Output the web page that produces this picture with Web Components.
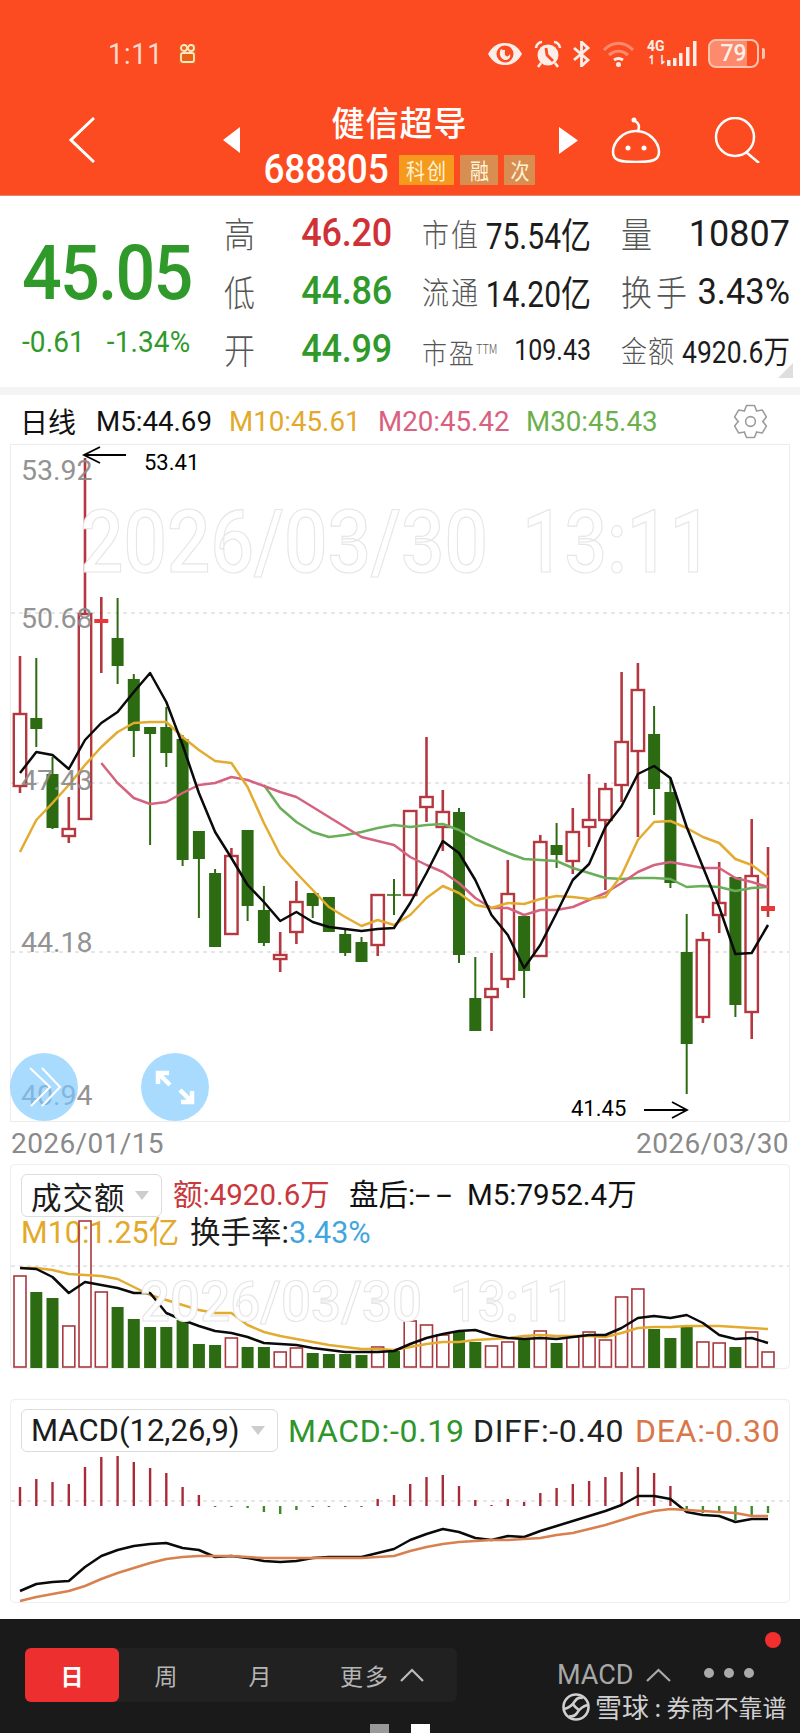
<!doctype html>
<html lang="zh">
<head>
<meta charset="utf-8">
<title>健信超导</title>
<style>
	html, body { margin: 0; background: #fff; }
	body {
		width: 800px;
		height: 1733px;
		overflow: hidden;
		font-family: Roboto, "Noto Sans CJK SC", sans-serif;
	}
	.gap-macd { height: 30px; }
	.gap-bar { height: 16px; }
</style>
</head>
<body>
	<app-header></app-header>
	<quote-panel></quote-panel>
	<ma-legend></ma-legend>
	<kline-chart>
		<round-button kind="forward"></round-button>
		<round-button kind="expand"></round-button>
	</kline-chart>
	<date-axis from="2026/01/15" to="2026/03/30"></date-axis>
	<volume-panel></volume-panel>
	<div class="gap-macd"></div>
	<macd-panel></macd-panel>
	<div class="gap-bar"></div>
	<period-bar></period-bar>

<script>
const FONT = 'Roboto, "Noto Sans CJK SC", sans-serif';
const CJK = '"Noto Sans CJK SC", Roboto, sans-serif';

// candles: type, wick top, body top, body bottom, wick bottom
const CANDLES = [
	['r', 656, 713, 787, 793], ['g', 658, 718, 729, 747], ['g', 757, 774, 828, 829], ['r', 797, 828, 837, 843],
	['r', 458, 613, 820, 820], ['d', 597, 619, 623, 673], ['g', 598, 638, 666, 684], ['g', 674, 679, 731, 757],
	['g', 727, 727, 734, 845], ['g', 707, 727, 753, 767], ['g', 735, 739, 860, 866], ['g', 831, 831, 859, 918],
	['g', 869, 873, 947, 947], ['r', 848, 855, 935, 935], ['g', 830, 830, 906, 921], ['g', 886, 910, 943, 946],
	['r', 932, 954, 960, 972], ['r', 881, 901, 933, 944], ['g', 893, 893, 906, 918], ['g', 897, 897, 932, 932],
	['g', 930, 934, 953, 956], ['g', 937, 942, 962, 962], ['r', 894, 894, 946, 956], ['x', 879, 895, 895, 915],
	['r', 810, 810, 896, 896], ['r', 737, 796, 808, 822], ['r', 790, 811, 828, 851], ['g', 808, 812, 955, 963],
	['g', 957, 998, 1031, 1031], ['r', 953, 988, 998, 1031], ['r', 860, 893, 980, 988], ['g', 916, 916, 971, 998],
	['r', 835, 841, 957, 957], ['g', 823, 845, 855, 868], ['r', 808, 831, 862, 874], ['r', 774, 819, 828, 847],
	['r', 783, 788, 821, 890], ['r', 672, 741, 786, 802], ['r', 663, 689, 752, 837], ['g', 706, 734, 789, 815],
	['g', 778, 792, 883, 888], ['g', 914, 952, 1044, 1094], ['r', 932, 939, 1018, 1023], ['r', 862, 902, 916, 933],
	['g', 877, 877, 1005, 1017], ['r', 819, 875, 1013, 1039], ['d', 847, 906, 911, 917],
];
const M5 = [773, 752, 755, 769, 740, 723, 712, 692, 673, 702, 745, 793, 832, 858, 885, 902, 921, 912, 922, 927, 929, 931, 929, 928, 903, 873, 841, 853, 880, 915, 935, 968, 945, 913, 880, 864, 827, 806, 774, 766, 778, 827, 867, 907, 954, 953, 925];
const M10 = [852, 820, 803, 785, 765, 747, 732, 723, 722, 722, 737, 750, 761, 763, 787, 823, 855, 873, 890, 907, 917, 926, 920, 925, 915, 898, 886, 893, 905, 908, 903, 904, 899, 896, 897, 899, 897, 875, 840, 822, 821, 828, 837, 843, 859, 865, 877];
const M20 = [763, 783, 798, 804, 802, 793, 785, 783, 777, 780, 786, 792, 797, 807, 817, 827, 837, 841, 845, 857, 865, 872, 883, 898, 908, 908, 915, 910, 910, 907, 900, 893, 883, 872, 865, 862, 865, 868, 868, 878, 882, 887];
const M30 = [785, 808, 822, 832, 837, 835, 832, 828, 825, 827, 825, 824, 830, 839, 846, 853, 859, 860, 861, 868, 873, 878, 879, 878, 878, 879, 887, 886, 887, 891, 888, 887];

const VOL = [1276, 1292, 1298, 1326, 1221, 1292, 1307, 1319, 1327, 1327, 1320, 1344, 1345, 1338, 1347, 1347, 1352, 1348, 1353, 1354, 1354, 1355, 1347, 1351, 1321, 1325, 1335, 1332, 1342, 1346, 1342, 1340, 1331, 1343, 1337, 1332, 1340, 1297, 1289, 1329, 1338, 1327, 1342, 1343, 1347, 1332, 1352];
const VOL5 = [1268, 1269, 1277, 1293, 1282, 1285, 1288, 1293, 1293, 1313, 1320, 1326, 1331, 1333, 1337, 1343, 1344, 1345, 1348, 1350, 1352, 1352, 1352, 1351, 1344, 1338, 1334, 1331, 1330, 1335, 1338, 1339, 1338, 1339, 1337, 1335, 1335, 1328, 1318, 1316, 1318, 1315, 1323, 1335, 1339, 1338, 1343];
const VOL10 = [1268, 1268, 1270, 1274, 1275, 1276, 1279, 1287, 1295, 1300, 1305, 1310, 1313, 1313, 1325, 1332, 1336, 1339, 1342, 1345, 1347, 1349, 1349, 1350, 1347, 1344, 1342, 1342, 1340, 1339, 1338, 1336, 1335, 1336, 1336, 1336, 1337, 1333, 1328, 1327, 1327, 1326, 1326, 1326, 1327, 1328, 1329];

// macd bars run from 1506 to this value
const HIST = [1487, 1479, 1482, 1484, 1467, 1457, 1456, 1462, 1468, 1473, 1487, 1495, 1507, 1507, 1508, 1512, 1514, 1510, 1507, 1507, 1507, 1507, 1499, 1495, 1484, 1477, 1475, 1486, 1500, 1505, 1499, 1502, 1493, 1488, 1484, 1481, 1477, 1472, 1467, 1473, 1486, 1509, 1513, 1513, 1520, 1515, 1513];
const DIFF = [1591, 1584, 1582, 1581, 1567, 1556, 1550, 1546, 1544, 1543, 1548, 1550, 1557, 1556, 1558, 1561, 1562, 1561, 1558, 1557, 1557, 1557, 1553, 1549, 1540, 1534, 1529, 1532, 1538, 1540, 1536, 1537, 1531, 1526, 1521, 1516, 1511, 1505, 1496, 1496, 1499, 1512, 1515, 1516, 1522, 1519, 1519];
const DEA = [1601, 1597, 1594, 1591, 1586, 1579, 1573, 1568, 1563, 1559, 1557, 1556, 1556, 1556, 1557, 1558, 1558, 1558, 1558, 1558, 1558, 1558, 1557, 1556, 1551, 1547, 1544, 1542, 1541, 1540, 1540, 1539, 1538, 1535, 1533, 1529, 1525, 1520, 1515, 1511, 1509, 1510, 1511, 1512, 1513, 1516, 1516];

const RED = '#b5373f';
const GREEN = '#2c6b12';

const slotX = (i) => +(20 + 16.26 * i).toFixed(1);

const maLine = (ys, color, start = 0, width = 2.5) => {
	const points = ys.map((y, i) => `${slotX(i + start)},${y}`).join(' ');
	return `<polyline points="${points}" fill="none" stroke="${color}" stroke-width="${width}" stroke-linejoin="round"/>`;
};

const dashed = (y) => `<line x1="11" x2="789" y1="${y}" y2="${y}" stroke="#cfcfcf" stroke-width="1" stroke-dasharray="4 4"/>`;

const stamp = (x, y, size, length, label) => `
	<text x="${x}" y="${y}" font-size="${size}" font-weight="500" textLength="${length}" lengthAdjust="spacingAndGlyphs"
		fill="#fff" stroke="#e6e6e6" stroke-width="1.2">${label}</text>`;

function makeTemplate(html) {
	const template = document.createElement('template');
	template.innerHTML = html;
	return template;
}

class Base extends HTMLElement {
	constructor() {
		super();
		this.attachShadow({ mode: 'open' });
		this.shadowRoot.appendChild(this.constructor.template.content.cloneNode(true));
	}
}

class AppHeader extends Base {
	static template = makeTemplate(`
		<style>
			:host {
				display: block;
				height: 196px;
				box-sizing: border-box;
				background: #fc4b20;
				border-bottom: 1px solid #e08a70;
				color: #fff;
				font-family: ${FONT};
			}
			svg { display: block; flex: none; }
			.status {
				display: flex;
				align-items: center;
				height: 37px;
				padding: 35px 0 0 108px;
				color: #fbdccd;
			}
			.time {
				font-size: 27px;
				letter-spacing: 0.8px;
				width: 71px;
				transform: scaleY(1.12);
				transform-origin: left center;
			}
			.icons {
				display: flex;
				align-items: center;
				margin-left: 291px;
			}
			.four {
				font-size: 14px;
				line-height: 13px;
				font-weight: 700;
				width: 20px;
				margin-left: 12px;
				white-space: nowrap;
				color: #fbeee9;
			}
			.battery {
				margin-left: 11px;
				width: 51px;
				height: 29px;
				box-sizing: border-box;
				border: 2px solid #f6c3af;
				border-radius: 8px;
				background: linear-gradient(90deg, #fd8a6c 79%, transparent 79%);
				font-size: 23px;
				line-height: 25px;
				font-weight: 500;
				text-align: center;
				color: #fdf0ea;
			}
			.tip {
				width: 3px;
				height: 11px;
				margin-left: 3px;
				background: #f6c3af;
				border-radius: 0 2px 2px 0;
			}
			.title {
				display: flex;
				align-items: center;
				height: 96px;
				margin-top: 20px;
				padding-left: 69px;
			}
			.center {
				width: 319px;
				align-self: flex-start;
				padding-top: 8px;
				display: flex;
				flex-direction: column;
				align-items: center;
			}
			.name {
				font-family: ${CJK};
				font-size: 33px;
				font-weight: 500;
				line-height: 42px;
				letter-spacing: 1px;
				transform: scaleY(1.05);
			}
			.code-row {
				display: flex;
				align-items: center;
				height: 30px;
				margin-top: 13px;
			}
			.code {
				font-size: 37px;
				font-weight: 500;
				letter-spacing: -0.2px;
				line-height: 30px;
				transform: scaleY(1.08);
				margin-right: 11px;
			}
			.badge {
				display: flex;
				justify-content: center;
				align-items: center;
				height: 30px;
				font-family: ${CJK};
				font-size: 19px;
				line-height: 24px;
				color: #fff3d8;
				background: #d88e50;
				border-radius: 1px;
			}
			.badge span { transform: scaleY(1.15); }
			.kc { width: 55px; background: #f59a1c; margin-right: 6px; letter-spacing: 2px; }
			.rong { width: 38px; margin-right: 6px; }
			.ci { width: 31px; }
		</style>
		<div class="status">
			<div class="time">1:11</div>
			<svg width="17" height="20" viewBox="0 0 17 20" fill="none" stroke="#ffe6c2" stroke-width="1.8">
				<rect x="0" y="0" width="17" height="20" fill="#e8611a" stroke="none"/>
				<circle cx="5" cy="4" r="3"/><circle cx="12" cy="4" r="3"/>
				<rect x="2" y="9" width="13" height="9" rx="2"/>
			</svg>
			<div class="icons">
				<svg width="36" height="24" viewBox="0 0 36 24">
					<path d="M1 12C6 3 12 1 18 1s12 2 17 11c-5 9-11 11-17 11S6 21 1 12z" fill="#fbeee9"/>
					<circle cx="18" cy="12" r="8.500" fill="#fc4b20"/>
					<path d="M14 7c-3 5 0 11 5 11 3 0 5-3 4-6-1 2-3 3-4 2-2-2-1-4-1-6-1 0-3 0-4-1z" fill="#fbeee9"/>
				</svg>
				<svg width="28" height="28" viewBox="0 0 28 28" style="margin-left:11px">
					<path d="M2 8c0-3 3-6 6-6M26 8c0-3-3-6-6-6" fill="none" stroke="#fbeee9" stroke-width="2.600"/>
					<path d="M7 23l-3 4M21 23l3 4" stroke="#fbeee9" stroke-width="2.600"/>
					<circle cx="14" cy="15" r="10.500" fill="#fbeee9"/>
					<path d="M12 8l1 7 6 6" fill="none" stroke="#fc4b20" stroke-width="2.800"/>
				</svg>
				<svg width="19" height="26" viewBox="0 0 19 26" style="margin-left:10px" fill="none" stroke="#fbeee9" stroke-width="2.800">
					<path d="M2 7l14 12-6.500 6V1L16 7 2 19"/>
				</svg>
				<svg width="33" height="26" viewBox="0 0 33 26" style="margin-left:11px" fill="none">
					<path d="M2 9C11 0 22 0 31 9" stroke="#fd8a6c" stroke-width="3"/>
					<path d="M7 14c6-5 13-5 19 0" stroke="#fd8a6c" stroke-width="3"/>
					<path d="M12 19c3-2 6-2 9 0" stroke="#fbeee9" stroke-width="3"/>
					<circle cx="16.500" cy="23.500" r="2.500" fill="#fbeee9"/>
				</svg>
				<div class="four">4G<br><span style="font-size:12px">↿⇂</span></div>
				<svg width="30" height="28" viewBox="0 0 30 28" fill="#fbeee9">
					<rect x="0" y="20" width="3.500" height="6"/><rect x="6" y="18" width="3.500" height="8"/><rect x="12" y="13" width="3.500" height="13"/><rect x="19" y="7" width="3.500" height="19"/><rect x="26" y="1" width="3.500" height="25"/>
				</svg>
				<div class="battery">79</div>
				<div class="tip"></div>
			</div>
		</div>
		<div class="title">
			<svg width="26" height="46" viewBox="0 0 26 46" fill="none" stroke="#fff" stroke-width="3">
				<path d="M25 1L2 23l23 22"/>
			</svg>
			<svg width="17" height="26" viewBox="0 0 17 26" style="margin-left:128px"><path d="M17 0v26L0 13z" fill="#fff"/></svg>
			<div class="center">
				<div class="name">健信超导</div>
				<div class="code-row">
					<span class="code">688805</span>
					<div class="badge kc"><span>科创</span></div>
					<div class="badge rong"><span>融</span></div>
					<div class="badge ci"><span>次</span></div>
				</div>
			</div>
			<svg width="19" height="27" viewBox="0 0 19 27"><path d="M0 0v27l19-13.500z" fill="#fff"/></svg>
			<svg width="50" height="46" viewBox="0 0 50 46" style="margin-left:33px" fill="none" stroke="#fff" stroke-width="2.500">
				<circle cx="23" cy="3" r="2.500" fill="#fff" stroke="none"/>
				<path d="M24 4c4 2 5 5 3 10"/>
				<path d="M25 14C38 14 48 25 48 35 48 43 42 45 25 45 8 45 2 43 2 35 2 25 12 14 25 14z"/>
				<circle cx="17" cy="31" r="2.500" fill="#fff" stroke="none"/><circle cx="33" cy="31" r="2.500" fill="#fff" stroke="none"/>
			</svg>
			<svg width="46" height="46" viewBox="0 0 46 46" style="margin-left:53px" fill="none" stroke="#fff" stroke-width="2.500">
				<circle cx="21" cy="20" r="19"/><path d="M32 35l13 11"/>
			</svg>
		</div>
	`);
}

class QuotePanel extends Base {
	static template = makeTemplate(`
		<style>
			:host {
				display: block;
				height: 199px;
				box-sizing: border-box;
				border-bottom: 8px solid #f4f4f4;
				font-family: ${FONT};
				position: relative;
			}
			.wrap { display: flex; padding-top: 8px; }
			.price { width: 224px; flex: none; padding-left: 22px; box-sizing: border-box; color: #2f9a2a; }
			.last {
				font-size: 70px;
				line-height: 70px;
				margin-top: 34px;
				font-weight: 500;
				letter-spacing: -1.8px;
				transform: scaleY(1.08);
			}
			.delta {
				display: flex;
				gap: 22px;
				margin-top: 20px;
				font-size: 28px;
				line-height: 30px;
				letter-spacing: 0.1px;
				transform: scaleY(1.05);
			}
			.grid {
				display: grid;
				grid-template-columns: 168px 169px 169px;
				column-gap: 30px;
				grid-auto-rows: 58px;
				align-items: center;
			}
			.cell { display: flex; justify-content: space-between; align-items: center; white-space: nowrap; }
			.big { font-family: ${CJK}; font-size: 31px; color: #555; transform: scaleY(1.15); line-height: 40px; font-weight: 300; }
			.lab { font-family: ${CJK}; font-size: 27px; letter-spacing: 2px; color: #555; transform: scaleY(1.15); line-height: 40px; font-weight: 300; }
			.val { font-size: 36px; font-weight: 500; letter-spacing: -0.2px; color: #2f9a2a; transform: scaleY(1.1); }
			.val.up { color: #cf3236; }
			.num { font-size: 30px; color: #1c1c1c; transform: scaleY(1.2); transform-origin: right center; }
			.num b { font-family: ${CJK}; font-weight: 400; }
			.ttm { font-size: 11px; vertical-align: 9px; letter-spacing: 0; }
			.corner {
				position: absolute;
				right: 7px;
				bottom: 9px;
				width: 0;
				height: 0;
				border-left: 15px solid transparent;
				border-bottom: 15px solid #dedede;
			}
		</style>
		<div class="wrap">
			<div class="price">
				<div class="last">45.05</div>
				<div class="delta"><span>-0.61</span><span>-1.34%</span></div>
			</div>
			<div class="grid">
				<div class="cell"><span class="big">高</span><span class="val up">46.20</span></div>
				<div class="cell"><span class="lab">市值</span><span class="num">75.54<b>亿</b></span></div>
				<div class="cell"><span class="big">量</span><span class="num" style="font-size:36px;transform:scaleY(1.05)">10807</span></div>
				<div class="cell"><span class="big">低</span><span class="val">44.86</span></div>
				<div class="cell"><span class="lab">流通</span><span class="num">14.20<b>亿</b></span></div>
				<div class="cell"><span class="big" style="letter-spacing:4px">换手</span><span class="num" style="font-size:34.500px;transform:scaleY(1.05)">3.43%</span></div>
				<div class="cell"><span class="big">开</span><span class="val">44.99</span></div>
				<div class="cell"><span class="lab" style="font-size:25px">市盈<span class="ttm">TTM</span></span><span class="num" style="font-size:25px">109.43</span></div>
				<div class="cell"><span class="lab" style="font-size:26px;letter-spacing:1px">金额</span><span class="num" style="font-size:26.500px">4920.6<b>万</b></span></div>
			</div>
		</div>
		<div class="corner"></div>
	`);
}

class MaLegend extends Base {
	static template = makeTemplate(`
		<style>
			:host {
				display: flex;
				align-items: center;
				height: 49px;
				box-sizing: border-box;
				padding: 3px 0 0 20px;
				font-family: ${FONT};
				font-size: 27.7px;
				white-space: nowrap;
			}
			.day { font-family: ${CJK}; font-size: 28px; width: 76px; color: #111; }
			.m5 { color: #111; width: 133px; }
			.m10 { color: #e3a92a; width: 149px; }
			.m20 { color: #d9607f; width: 148px; }
			.m30 { color: #6ab04c; width: 207px; }
		</style>
		<span class="day">日线</span>
		<span class="m5">M5:44.69</span>
		<span class="m10">M10:45.61</span>
		<span class="m20">M20:45.42</span>
		<span class="m30">M30:45.43</span>
		<svg id="gear" width="35" height="35" viewBox="-18 -18 36 36" fill="none" stroke="#9b9b9b" stroke-width="1.6"></svg>
	`);

	connectedCallback() {
		const points = [];
		for (let i = 0; i < 6; i++) {
			const a = (i * 60 - 90) * Math.PI / 180;
			const step = 14 * Math.PI / 180;
			[[a - step, 17], [a + step, 17], [a + 2.2 * step, 12.5], [a + 60 * Math.PI / 180 - 2.2 * step, 12.5]].forEach(([t, r]) => {
				points.push(`${(r * Math.cos(t)).toFixed(1)},${(r * Math.sin(t)).toFixed(1)}`);
			});
		}
		this.shadowRoot.getElementById('gear').innerHTML = `<polygon points="${points.join(' ')}" stroke-linejoin="round"/><circle r="5"/>`;
	}
}

class KlineChart extends Base {
	static template = makeTemplate(`
		<style>
			:host {
				display: grid;
				height: 678px;
				font-family: ${FONT};
			}
			svg { grid-area: 1 / 1; display: block; font-family: ${FONT}; }
			.overlay {
				grid-area: 1 / 1;
				align-self: end;
				display: flex;
				gap: 63px;
				padding: 0 0 1px 10px;
			}
		</style>
		<svg id="plot" width="800" height="678" viewBox="0 444 800 678"></svg>
		<div class="overlay"><slot></slot></div>
	`);

	connectedCallback() {
		const parts = [];
		parts.push('<rect x="10.500" y="444.500" width="779" height="677" fill="none" stroke="#ededed"/>');
		[613, 783, 952].forEach((y) => parts.push(dashed(y)));
		CANDLES.forEach(([type, wickTop, bodyTop, bodyBottom, wickBottom], i) => {
			const x = slotX(i);
			const green = type === 'g' || type === 'x';
			const color = green ? GREEN : RED;
			const width = green ? 2 : 2.6;
			parts.push(`<line x1="${x}" x2="${x}" y1="${wickTop}" y2="${wickBottom}" stroke="${color}" stroke-width="${width}"/>`);
			if (type === 'g') parts.push(`<rect x="${x - 6}" y="${bodyTop}" width="12" height="${bodyBottom - bodyTop}" fill="${GREEN}"/>`);
			if (type === 'r') parts.push(`<rect x="${x - 6.2}" y="${bodyTop + 1}" width="12.400" height="${bodyBottom - bodyTop - 2}" fill="#fff" stroke="${RED}" stroke-width="2.400"/>`);
			if (type === 'd') parts.push(`<rect x="${x - 7}" y="${bodyTop}" width="14" height="${bodyBottom - bodyTop}" fill="#e8383a"/>`);
			if (type === 'x') parts.push(`<line x1="${x - 7}" x2="${x + 7}" y1="${bodyTop}" y2="${bodyTop}" stroke="${GREEN}" stroke-width="1.500"/>`);
		});
		parts.push(maLine(M30, '#69ae58', 15));
		parts.push(maLine(M20, '#d4637f', 5));
		parts.push(maLine(M10, '#e3ac30', 0));
		parts.push(maLine(M5, '#0a0a0a', 0));
		parts.push(stamp(80, 572, 87, 408, '2026/03/30'));
		parts.push(stamp(522, 572, 87, 190, '13:11'));
		[[470, '53.92'], [618, '50.68'], [780, '47.43'], [942, '44.18'], [1095, '40.94']].forEach(([y, label]) => {
			parts.push(`<text x="21" y="${y + 10}" font-size="28.500" fill="#8a8a8a" opacity="0.92">${label}</text>`);
		});
		parts.push('<path d="M126 455H84M100 447l-16 8 16 8" fill="none" stroke="#000" stroke-width="1.800"/>');
		parts.push('<text x="144" y="470" font-size="22" fill="#000">53.41</text>');
		parts.push('<path d="M644 1110h43M672 1102l15 8-15 8" fill="none" stroke="#000" stroke-width="1.800"/>');
		parts.push('<text x="571" y="1116" font-size="22" fill="#000">41.45</text>');
		this.shadowRoot.getElementById('plot').innerHTML = parts.join('');
	}
}

class RoundButton extends Base {
	static template = makeTemplate(`
		<style>
			:host {
				display: block;
				width: 68px;
				height: 68px;
				border-radius: 50%;
				background: rgba(125, 200, 255, 0.66);
			}
			svg { display: block; }
		</style>
		<svg id="icon" width="68" height="68" viewBox="0 0 68 68" fill="none" stroke="#fff"></svg>
	`);

	connectedCallback() {
		const icon = this.shadowRoot.getElementById('icon');
		if (this.getAttribute('kind') === 'forward') {
			icon.setAttribute('stroke-width', '2');
			icon.innerHTML = '<path d="M20 15l20 19-19 19M32 15l18 19-18 19"/>';
		} else {
			icon.setAttribute('stroke-width', '4.500');
			icon.innerHTML = '<path d="M17 31V20h11M17 20l12 12M51 38v11H40M51 49L39 37"/>';
		}
	}
}

class DateAxis extends Base {
	static template = makeTemplate(`
		<style>
			:host {
				display: flex;
				justify-content: space-between;
				height: 42px;
				box-sizing: border-box;
				padding: 5px 11px 0 11px;
				font-family: ${FONT};
				font-size: 28px;
				line-height: 34px;
				letter-spacing: 0.4px;
				color: #8a8a8a;
			}
		</style>
		<span id="from"></span><span id="to"></span>
	`);

	connectedCallback() {
		this.shadowRoot.getElementById('from').textContent = this.getAttribute('from');
		this.shadowRoot.getElementById('to').textContent = this.getAttribute('to');
	}
}

class IndicatorSelect extends Base {
	static template = makeTemplate(`
		<style>
			:host {
				display: flex;
				align-items: center;
				justify-content: space-between;
				height: 43px;
				box-sizing: border-box;
				padding: 0 12px 0 9px;
				border: 1px solid #dcdcdc;
				border-radius: 6px;
				color: #1c1c1c;
				background: #fff;
				white-space: nowrap;
			}
			.tri {
				width: 0;
				height: 0;
				border-left: 7px solid transparent;
				border-right: 7px solid transparent;
				border-top: 9px solid #cdcdcd;
			}
		</style>
		<span><slot></slot></span>
		<span class="tri"></span>
	`);
}

class VolumePanel extends Base {
	static template = makeTemplate(`
		<style>
			:host {
				display: grid;
				height: 205px;
				font-family: ${FONT};
				font-size: 29.5px;
				white-space: nowrap;
			}
			.legend { grid-area: 1 / 1; padding: 10px 0 0 21px; }
			svg { grid-area: 1 / 1; display: block; font-family: ${FONT}; }
			.row { display: flex; align-items: center; }
			.row1 { height: 43px; line-height: 34px; }
			.row1 > span { position: relative; top: -2px; }
			.row2 { height: 28px; line-height: 28px; font-size: 30.5px; }
			indicator-select { width: 141px; font-family: ${CJK}; font-size: 30.5px; letter-spacing: 1px; margin-right: 11px; }
			.cn { font-family: ${CJK}; }
			.amt { color: #c8383c; width: 176px; }
			.after { color: #111; width: 118px; }
			.dash { display: inline-block; transform: scaleX(1.9); transform-origin: left center; letter-spacing: 3px; }
			.m5 { color: #111; }
			.m10 { color: #e3a92a; width: 169px; margin-left: 0; }
			.rate { color: #1c1c1c; }
			.rate i { font-style: normal; color: #42a5e0; }
		</style>
		<div class="legend">
			<div class="row row1">
				<indicator-select>成交额</indicator-select>
				<span class="amt"><span class="cn">额</span>:4920.6<span class="cn">万</span></span>
				<span class="after"><span class="cn">盘后</span>:<span class="dash">--</span></span>
				<span class="m5">M5:7952.4<span class="cn">万</span></span>
			</div>
			<div class="row row2">
				<span class="m10">M10:1.25<span class="cn">亿</span></span>
				<span class="rate"><span class="cn">换手率</span>:<i>3.43%</i></span>
			</div>
		</div>
		<svg id="plot" width="800" height="205" viewBox="0 1164 800 205"></svg>
	`);

	connectedCallback() {
		const parts = ['<rect x="10.500" y="1164.500" width="779" height="204" rx="4" fill="none" stroke="#eeeeee"/>', dashed(1266)];
		VOL.forEach((top, i) => {
			const x = slotX(i);
			if (CANDLES[i][0] === 'g' || CANDLES[i][0] === 'x') {
				parts.push(`<rect x="${x - 6}" y="${top}" width="12" height="${1368 - top}" fill="${GREEN}"/>`);
			} else {
				parts.push(`<rect x="${x - 6}" y="${top}" width="12" height="${1367 - top}" fill="none" stroke="#a8393f" stroke-width="1.600"/>`);
			}
		});
		parts.push(maLine(VOL10, '#e3ac30'));
		parts.push(maLine(VOL5, '#0a0a0a'));
		parts.push(stamp(140, 1321, 56, 282, '2026/03/30'));
		parts.push(stamp(450, 1321, 56, 124, '13:11'));
		this.shadowRoot.getElementById('plot').innerHTML = parts.join('');
	}
}

class MacdPanel extends Base {
	static template = makeTemplate(`
		<style>
			:host {
				display: grid;
				height: 204px;
				font-family: ${FONT};
				font-size: 32px;
				letter-spacing: 0.7px;
				white-space: nowrap;
			}
			.legend { grid-area: 1 / 1; display: flex; align-items: center; height: 43px; padding: 10px 0 0 21px; }
			svg { grid-area: 1 / 1; display: block; }
			indicator-select { width: 257px; font-size: 31px; letter-spacing: 0; margin-right: 10px; }
			.macd { color: #2e962a; width: 185px; }
			.diff { color: #222; width: 162px; }
			.dea { color: #d9774a; }
		</style>
		<div class="legend">
			<indicator-select>MACD(12,26,9)</indicator-select>
			<span class="macd">MACD:-0.19</span>
			<span class="diff">DIFF:-0.40</span>
			<span class="dea">DEA:-0.30</span>
		</div>
		<svg id="plot" width="800" height="204" viewBox="0 1399 800 204"></svg>
	`);

	connectedCallback() {
		const parts = ['<rect x="10.500" y="1399.500" width="779" height="203" rx="4" fill="none" stroke="#eeeeee"/>', dashed(1501)];
		HIST.forEach((end, i) => {
			const x = slotX(i);
			const color = end > 1506 ? '#3c8a2a' : '#a92b37';
			parts.push(`<line x1="${x}" x2="${x}" y1="1506" y2="${end}" stroke="${color}" stroke-width="2.400"/>`);
		});
		parts.push(maLine(DIFF, '#0a0a0a'));
		parts.push(maLine(DEA, '#d9804f'));
		this.shadowRoot.getElementById('plot').innerHTML = parts.join('');
	}
}

class PeriodBar extends Base {
	static template = makeTemplate(`
		<style>
			:host {
				display: block;
				height: 114px;
				box-sizing: border-box;
				padding: 29px 0 0 25px;
				background: #1a1a1a;
				color: #b5b5b5;
				font-family: ${CJK};
				position: relative;
			}
			.top { display: flex; align-items: center; height: 54px; }
			.tabs {
				display: flex;
				align-items: center;
				width: 432px;
				height: 54px;
				background: #212121;
				border-radius: 6px;
				font-size: 23px;
			}
			.tab { width: 94px; text-align: center; line-height: 54px; flex: none; }
			.tab.on { background: #ee2f2f; color: #fff; border-radius: 6px; font-weight: 700; }
			.more { display: flex; align-items: center; justify-content: center; gap: 10px; width: 150px; letter-spacing: 2px; }
			.macd {
				margin-left: 100px;
				font-family: ${FONT};
				font-size: 27px;
				color: #a8a8a8;
				display: flex;
				align-items: center;
				gap: 12px;
				width: 147px;
			}
			.dots { display: flex; gap: 10px; margin-top: -4px; }
			.dots i { display: block; width: 10px; height: 10px; border-radius: 50%; background: #aaa; }
			.nav { display: flex; justify-content: center; gap: 22px; margin: 22px 0 0 0; padding-right: 25px; }
			.nav i { display: block; width: 19px; height: 9px; background: #999; }
			.nav i + i { background: #fff; }
			.red {
				position: absolute;
				left: 765px;
				top: 13px;
				width: 16px;
				height: 16px;
				border-radius: 50%;
				background: #f22f2f;
			}
			.mark {
				position: absolute;
				left: 562px;
				top: 74px;
				display: flex;
				align-items: center;
				color: #cfcfcf;
				font-size: 27px;
				line-height: 28px;
				white-space: nowrap;
			}
			.mark svg { margin-right: 5px; }
			.mark small { font-size: 24px; }
		</style>
		<div class="top">
			<div class="tabs">
				<div class="tab on">日</div>
				<div class="tab">周</div>
				<div class="tab">月</div>
				<div class="tab more">更多<svg width="24" height="14" viewBox="0 0 24 14" fill="none" stroke="#bbb" stroke-width="2.200"><path d="M1 13L12 2l11 11"/></svg></div>
			</div>
			<div class="macd">MACD<svg width="25" height="14" viewBox="0 0 25 14" fill="none" stroke="#aaa" stroke-width="2.200"><path d="M1 13L12.500 2 24 13"/></svg></div>
			<div class="dots"><i></i><i></i><i></i></div>
		</div>
		<div class="nav"><i></i><i></i></div>
		<div class="red"></div>
		<div class="mark">
			<svg width="28" height="28" viewBox="0 0 28 28" fill="none" stroke="#cfcfcf" stroke-width="2.600">
				<circle cx="14" cy="14" r="12.500"/>
				<path d="M2 16c5-1 8-3 11-8 2-3 5-4 8-3M26 12c-5 1-8 3-11 8-2 3-5 4-8 3M10 10c2 3 4 5 8 8"/>
			</svg>
			<span>雪球</span><small>&nbsp;:&nbsp;券商不靠谱</small>
		</div>
	`);
}

customElements.define('indicator-select', IndicatorSelect);
customElements.define('app-header', AppHeader);
customElements.define('quote-panel', QuotePanel);
customElements.define('ma-legend', MaLegend);
customElements.define('kline-chart', KlineChart);
customElements.define('round-button', RoundButton);
customElements.define('date-axis', DateAxis);
customElements.define('volume-panel', VolumePanel);
customElements.define('macd-panel', MacdPanel);
customElements.define('period-bar', PeriodBar);
</script>
</body>
</html>
